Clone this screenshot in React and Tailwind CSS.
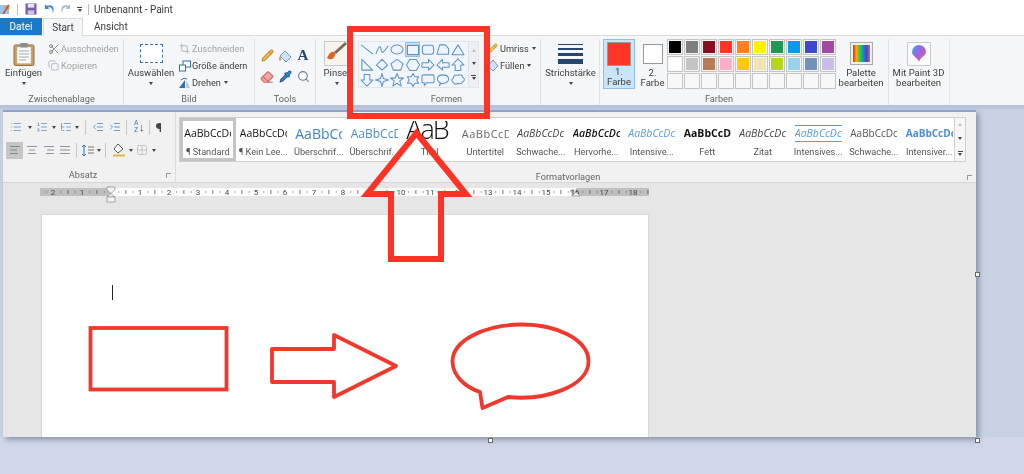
import React from "react";
import { Scissors, Copy, Crop, Pencil, Search, Pipette, Eraser, List, ListOrdered, ListTree, IndentDecrease, IndentIncrease, AlignLeft, AlignCenter, AlignRight, AlignJustify, Grid2x2 } from "lucide-react";

const Caret = ({ className = "" }) => <span className={`inline-block w-0 h-0 border-l-[2.5px] border-r-[2.5px] border-t-[3px] border-l-transparent border-r-transparent border-t-[#444] ${className}`} />;

const S = { fill: "#eef4fb", stroke: "#5c93c4", strokeWidth: 1.1, strokeLinejoin: "round" };
const shapes = [
  <path d="M1 2L14 12" {...S} fill="none" />,
  <path d="M1 12C4 3 6 2 6.5 7S9 11 14 3" {...S} fill="none" />,
  <ellipse cx="7.5" cy="7" rx="6.5" ry="4.8" {...S} />,
  <rect x="1.5" y="2.5" width="12" height="10" {...S} strokeWidth="1.3" />,
  <rect x="1.5" y="2.5" width="12" height="9.5" rx="2.5" {...S} />,
  <path d="M1 12L4 2H10L13.5 6V12Z" {...S} />,
  <path d="M7.5 2L14 12.5H1Z" {...S} />,
  <path d="M2 1.5V13H13.5Z" {...S} />,
  <path d="M7.5 1.5L13.5 7.5L7.5 13L1.5 7.5Z" {...S} />,
  <path d="M7.5 1.5L14 6L11.5 13H3.5L1 6Z" {...S} />,
  <path d="M4 1.5H11L14.5 7.5L11 13.5H4L.5 7.5Z" {...S} />,
  <path d="M1 5H8V1.5L14 7.5L8 13V10H1Z" {...S} />,
  <path d="M14 5H7V1.5L1 7.5L7 13V10H14Z" {...S} />,
  <path d="M7.5 1L14 7.5H10.5V13.5H4.5V7.5H1Z" {...S} />,
  <path d="M7.5 14L14 7.5H10.5V1.5H4.5V7.5H1Z" {...S} />,
  <path d="M7.5 .5L9 6L14.5 7.5L9 9L7.5 14.5L6 9L.5 7.5L6 6Z" {...S} />,
  <path d="M7.5 .5L9.5 5.5H14.5L10.5 8.5L12 14L7.5 11L3 14L4.5 8.5L.5 5.5H5.5Z" {...S} />,
  <path d="M7.5 .5L9.5 4H13.5L11.5 7.5L13.5 11H9.5L7.5 14.5L5.5 11H1.5L3.5 7.5L1.5 4H5.5Z" {...S} />,
  <path d="M2.5 2H12.5Q14 2 14 3.5V9Q14 10.5 12.5 10.5H6L3.5 13.5V10.5H2.5Q1 10.5 1 9V3.5Q1 2 2.5 2Z" {...S} />,
  <path d="M3.5 13.5L4.5 10.5C-.5 8 1 2 7.5 2S15.5 8 10.5 10.5C8.5 11.3 6.5 11.3 5.5 11Z" {...S} />,
  <path d="M3 10.5C0 9.5 .5 6 2.5 5.5C2.5 2.5 6 1.5 7.5 2.5C10 1 12.5 2.5 12.5 4.5C15 5.5 15 9 12 10C10.5 12 8 11.5 7 11C5.5 12.5 3 12 3 10.5Z" {...S} />,
];

const row1 = ["#000000", "#7f7f7f", "#880f1f", "#ff3526", "#ff7f27", "#fff200", "#1d9a50", "#0f96ee", "#3f48cc", "#a349a4"];
const row2 = ["#ffffff", "#c3c3c3", "#b97a57", "#ffaec9", "#ffc90e", "#efe4b0", "#b5d61d", "#99d2ea", "#7092be", "#c8bfe7"];

function Group({ width, label, children, labelClass = "" }) {
  return (
    <div className="flex flex-col shrink-0 h-[66px] border-r border-[#e2e3e6]" style={{ width }}>
      <div className="flex-1 flex min-h-0">{children}</div>
      <div className={`h-[14px] leading-[16px] text-center text-[#666] text-[9.2px] ${labelClass}`}>{label}</div>
    </div>
  );
}

function BigButton({ width, icon, lines, caret = true, iconH = 29, className = "" }) {
  return (
    <div className={`flex flex-col items-center shrink-0 ${className}`} style={{ width }}>
      <div className="flex items-center justify-center" style={{ height: iconH }}>{icon}</div>
      {lines.map((l) => <div key={l} className="text-[9.5px] leading-[10px] text-[#3d3d3d] whitespace-nowrap">{l}</div>)}
      {caret && <Caret className="mt-[4px]" />}
    </div>
  );
}

function SmallRow({ icon, text, disabled, caret }) {
  return (
    <div className={`flex items-center h-[17px] text-[9.2px] whitespace-nowrap ${disabled ? "text-[#a3a3a3]" : "text-[#3d3d3d]"}`}>
      <span className="w-[13px] flex justify-center mr-[1px]">{icon}</span>
      <span>{text}</span>
      {caret && <Caret className="ml-[3px]" />}
    </div>
  );
}

function TitleBar() {
  return (
    <div className="h-[18px] flex items-center bg-white text-[10px] text-[#3a3a3a]">
      <svg width="11" height="13" viewBox="0 0 11 13"><rect x="0" y="2" width="9" height="9" fill="#9dc3e6" /><circle cx="7" cy="5" r="2.5" fill="#e8a33d" /><path d="M3 11L9 2" stroke="#c0504d" strokeWidth="1.5" /></svg>
      <span className="ml-[6px] w-px h-[11px] bg-[#bbb]" />
      <svg width="12" height="12" viewBox="0 0 13 13" className="ml-[7px]"><rect x=".5" y=".5" width="12" height="12" fill="#7a5ea8" /><rect x="3" y="1" width="7" height="4" fill="#e6e6f2" /><rect x="3" y="8" width="7" height="4.500" fill="#d0c4e2" /></svg>
      <svg width="11" height="12" viewBox="0 0 12 12" className="ml-[7px]"><path d="M1 1V6H6L4 4.5C7 3 10 5 9.5 11C12 6 10 0 3.5 2.5Z" fill="#2f8fd6" /></svg>
      <svg width="11" height="12" viewBox="0 0 12 12" className="ml-[5px]"><path d="M11 1V6H6L8 4.5C5 3 2 5 2.500 11C0 6 2 0 8.5 2.5Z" fill="#aabcca" /></svg>
      <span className="ml-[6px] flex flex-col items-center gap-[1px]"><span className="w-[5px] h-px bg-[#444]" /><Caret /></span>
      <span className="ml-[6px] w-px h-[11px] bg-[#bbb]" />
      <span className="ml-[5px]">Unbenannt - Paint</span>
    </div>
  );
}

function Tabs() {
  return (
    <div className="h-[17px] flex items-stretch bg-white text-[10px]">
      <div className="w-[42px] bg-[#1979ca] text-white flex items-center justify-center">Datei</div>
      <div className="w-[40px] ml-px bg-[#f5f6f7] border-x border-t border-[#dadbdc] text-[#3a3a3a] flex items-center justify-center relative z-10 -mb-px">Start</div>
      <div className="ml-[11px] text-[#3a3a3a] flex items-center">Ansicht</div>
    </div>
  );
}

function Ribbon() {
  const clip = (
    <svg width="22" height="24" viewBox="0 0 22 24"><rect x="1" y="3" width="20" height="20.5" rx="1.5" fill="#c99f6b" stroke="#94703f" /><rect x="4" y="5" width="14" height="16.5" fill="#fdfdf7" stroke="#b7b7b0" strokeWidth=".5" /><path d="M6 9H16M6 12H16M6 15H16M6 18H13" stroke="#9ab" strokeWidth="1" /><rect x="7" y="1" width="8" height="4.5" fill="#8f8f8f" rx="1" /></svg>
  );
  return (
    <div className="h-[70px] bg-[#f5f6f7] border-t border-[#dadbdc] flex pt-[3px]">
      <Group width={124} label="Zwischenablage">
        <BigButton width={47} icon={clip} lines={["Einfügen"]} />
        <div className="pt-[1px]">
          <SmallRow disabled icon={<Scissors size={12} color="#8a8a8a" />} text="Ausschneiden" />
          <SmallRow disabled icon={<Copy size={11} color="#a9b5c7" />} text="Kopieren" />
        </div>
      </Group>
      <Group width={131} label="Bild">
        <BigButton width={54} icon={<span className="block w-[23px] h-[19px] border border-dashed border-[#3c6eae] bg-white" />} lines={["Auswählen"]} />
        <div className="pt-[1px]">
          <SmallRow disabled icon={<Crop size={11} color="#a7afbd" />} text="Zuschneiden" />
          <SmallRow icon={<svg width="12" height="12" viewBox="0 0 12 12"><rect x="4" y="1" width="7.5" height="6" fill="#fff" stroke="#2f6fb5" /><rect x=".5" y="5" width="6" height="6" fill="#fff" stroke="#2f6fb5" /></svg>} text="Größe ändern" />
          <SmallRow caret icon={<svg width="13" height="12" viewBox="0 0 13 12"><path d="M1 11L7 3V11Z" fill="#2f6fb5" /><path d="M8 3L12 11H8Z" fill="#b7c9dd" /><path d="M3 3Q6 0 9 2" stroke="#2f6fb5" fill="none" /></svg>} text="Drehen" />
        </div>
      </Group>
      <Group width={61} label="Tools">
        <div className="grid grid-cols-[18px_18px_18px] grid-rows-[21px_21px] place-items-center ml-[3px] mt-[6px]">
          <Pencil size={13} color="#c08a2c" fill="#f0c05a" />
          <svg width="14" height="14" viewBox="0 0 14 14"><path d="M7 2L13 8L8 13L2 7Z" fill="#cfe2f5" stroke="#6d9cc9" /><path d="M2 7Q0 11 2 12Q4 11 2 7" fill="#e47f5a" /></svg>
          <span className="font-['Liberation_Serif',serif] font-bold text-[15px] leading-none text-[#24456e]">A</span>
          <Eraser size={14} color="#c96f6a" fill="#f2a6a2" />
          <Pipette size={13} color="#1f5d99" fill="#3f8bd0" />
          <Search size={13} color="#6f7f90" />
        </div>
      </Group>
      <Group width={37} label="">
        <BigButton width={37} className="pl-[4px]" lines={["Pinsel"]} icon={
          <svg width="25" height="25" viewBox="0 0 25 25"><rect x=".5" y=".5" width="24" height="24" fill="#f7f3ee" stroke="#c9c9c9" /><path d="M3 17C8 21 12 15 11 12C9 9 5 12 3 17Z" fill="#d9661f" /><path d="M11 12L22 2" stroke="#7a6a58" strokeWidth="3" /></svg>} />
      </Group>
      <Group width={188} label="Formen">
        <div className="pl-[5px] pt-[2px] flex items-start">
          <div className="flex bg-[#f1f6fc] border border-[#e3e5e9] h-[47px]">
            <div className="grid grid-cols-[repeat(7,15.3px)] grid-rows-[repeat(3,15.3px)] w-[108px]">
              {shapes.map((s, i) => (
                <div key={i} className={`flex items-center justify-center ${i === 3 ? "bg-[#cde4f7] border border-[#8dbfe8]" : ""}`}>
                  <svg width="14" height="14" viewBox="0 0 15 15" className="overflow-visible">{s}</svg>
                </div>
              ))}
            </div>
            <div className="w-[10px] ml-px bg-[#eeeff2] border-l border-[#e0e1e5] flex flex-col items-center justify-around py-[2px]">
              <Caret className="rotate-180 opacity-30" />
              <Caret />
              <span className="flex flex-col items-center gap-[1px]"><span className="w-[5px] h-px bg-[#444]" /><Caret /></span>
            </div>
          </div>
          <div className="ml-[7px] -mt-[1px]">
            <SmallRow caret icon={<Pencil size={11} color="#c8902f" fill="#f0c05a" />} text="Umriss" />
            <SmallRow caret icon={<svg width="12" height="13" viewBox="0 0 12 13"><path d="M6 1L11 7L6 12L1 7Z" fill="#cfe2f5" stroke="#6d9cc9" /></svg>} text="Füllen" />
          </div>
        </div>
      </Group>
      <Group width={59} label="">
        <BigButton width={59} lines={["Strichstärke"]} icon={
          <span className="flex flex-col w-[25px] gap-[3px]">
            <span className="h-px bg-[#26456f]" /><span className="h-[2px] bg-[#26456f]" /><span className="h-[3px] bg-[#26456f]" /><span className="h-[5px] bg-[#26456f]" />
          </span>} />
      </Group>
      <Group width={289} label={<span className="pr-[50px]">Farben</span>}>
        <div className="flex items-start pl-[3px]">
          <div className="w-[32px] h-[50px] bg-[#cce4f7] border border-[#8fc0ea] flex flex-col items-center pt-[2px]">
            <span className="block w-[24px] h-[24px] bg-[#ff3526] border-[1px] border-[#999]" />
            <span className="text-[9.5px] leading-[10px] text-[#3d3d3d] mt-[1px]">1.</span>
            <span className="text-[9.5px] leading-[10px] text-[#3d3d3d]">Farbe</span>
          </div>
          <div className="w-[35px] flex flex-col items-center pt-[5px]">
            <span className="block w-[20px] h-[20px] bg-white border border-[#999]" />
            <span className="text-[9.5px] leading-[10px] text-[#3d3d3d] mt-[4px]">2.</span>
            <span className="text-[9.5px] leading-[10px] text-[#3d3d3d]">Farbe</span>
          </div>
          <div className="grid grid-cols-[repeat(10,17px)] auto-rows-[17px] ml-[-3px]">
            {[...row1, ...row2].map((c, i) => (
              <div key={i} className="w-[16px] h-[16px] border border-[#c4c4c4] p-px"><div className="w-full h-full" style={{ background: c }} /></div>
            ))}
            {Array.from({ length: 10 }).map((_, i) => <div key={i} className="w-[16px] h-[16px] border border-[#c4c4c4] bg-[#f8f8f9]" />)}
          </div>
          <BigButton width={50} caret={false} className="ml-[-1px]" lines={["Palette", "bearbeiten"]} icon={
            <span className="block w-[23px] h-[23px] border border-[#aaa] p-[2px] bg-[#eee]"><span className="block w-full h-full bg-[linear-gradient(to_right,#e23,#fa0,#3c3,#09c,#63c,#888)]" /></span>} />
        </div>
      </Group>
      <Group width={61} label="">
        <BigButton width={59} caret={false} lines={["Mit Paint 3D", "bearbeiten"]} icon={
          <span className="flex items-center justify-center w-[24px] h-[24px] border border-[#ccc] bg-[#fafafa]">
            <svg width="14" height="18" viewBox="0 0 14 18"><defs><linearGradient id="p3" x1="0" y1="0" x2="1" y2="1"><stop offset="0" stopColor="#33a6f0" /><stop offset=".5" stopColor="#a65fe0" /><stop offset="1" stopColor="#f0703c" /></linearGradient></defs><path d="M7 17C6 13 0 11 0 7A7 7 0 0 1 14 7C14 11 8 12 7 17Z" fill="url(#p3)" /></svg>
          </span>} />
      </Group>
    </div>
  );
}

const styles = [
  ["AaBbCcDc", "¶ Standard", "text-[#111] text-[10.5px]"],
  ["AaBbCcDc", "¶ Kein Lee...", "text-[#111] text-[10.5px]"],
  ["AaBbCc", "Überschrif...", "text-[#3f83c4] text-[14px]"],
  ["AaBbCcD", "Überschrif...", "text-[#4a8dcc] text-[12px]"],
  ["AaB", "Titel", "text-[#111] text-[27px] font-light tracking-[-2px] -mt-[9px]"],
  ["AaBbCcD", "Untertitel", "text-[#666] text-[11px] tracking-[0.5px]"],
  ["AaBbCcDc", "Schwache...", "text-[#444] text-[10.5px] italic"],
  ["AaBbCcDc", "Hervorhe...", "text-[#111] text-[10.5px] italic font-semibold"],
  ["AaBbCcDc", "Intensive...", "text-[#5b9bd5] text-[10.5px] italic"],
  ["AaBbCcDc", "Fett", "text-[#111] text-[10.5px] font-bold"],
  ["AaBbCcDc", "Zitat", "text-[#444] text-[10.5px] italic"],
  ["AaBbCcDc", "Intensives...", "text-[#5b9bd5] text-[10.5px] italic border-y border-[#5b9bd5]"],
  ["AaBbCcDc", "Schwache...", "text-[#555] text-[10px]"],
  ["AaBbCcDc", "Intensiver...", "text-[#4a8dd6] text-[10px] font-bold"],
];

const I = { size: 12, strokeWidth: 1.4, color: "#5f6b78" };
const Sep = ({ className = "mx-[4px]" }) => <span className={`w-px h-[15px] bg-[#c6c6c6] ${className}`} />;

function WordRibbon() {
  return (
    <div className="h-[71px] bg-[#f1f1f2] border-b border-[#d4d4d4] flex">
      <div className="w-[173px] shrink-0 flex flex-col border-r border-[#dcdcdc]">
        <div className="h-[26px] flex items-center pl-[7px] pt-[6px]">
          <List {...I} color="#4d84bd" /><Caret className="ml-[6px]" />
          <ListOrdered {...I} color="#4d84bd" className="ml-[4px]" /><Caret className="ml-[4px]" />
          <ListTree {...I} color="#4d84bd" className="ml-[4px]" /><Caret className="ml-[3px]" />
          <Sep className="ml-[6px]" />
          <IndentDecrease {...I} color="#2f74bd" className="ml-[6px]" /><IndentIncrease {...I} color="#2f74bd" className="ml-[5px]" />
          <Sep className="ml-[5px]" />
          <span className="text-[7px] leading-[7px] text-[#2f74bd] w-[5px] ml-[7px]">A<br />Z</span><span className="text-[11px] leading-none text-[#444]">↓</span>
          <Sep className="ml-[4px]" />
          <span className="text-[13px] leading-none text-[#444] font-bold ml-[6px]">¶</span>
        </div>
        <div className="h-[26px] flex items-center pl-[3px] pt-[3px]">
          <span className="w-[17px] h-[17px] bg-[#c6c6c6] flex items-center justify-center"><AlignLeft {...I} /></span>
          <span className="w-[17px] flex justify-center"><AlignCenter {...I} /></span>
          <span className="w-[17px] flex justify-center"><AlignRight {...I} /></span>
          <span className="w-[15px] flex justify-center"><AlignJustify {...I} /></span>
          <Sep />
          <svg width="13" height="13" viewBox="0 0 13 13"><path d="M3 1V12M1 3L3 1L5 3M1 10L3 12L5 10" stroke="#2f74bd" fill="none" /><path d="M7 3H13M7 6H13M7 9H13" stroke="#777" /></svg>
          <Caret className="ml-[3px]" />
          <Sep className="ml-[4px] mr-[6px]" />
          <svg width="14" height="14" viewBox="0 0 14 14"><path d="M6 1L11 6L6 10L2 6Z" fill="#fff" stroke="#555" /><rect x="1" y="11.5" width="12" height="2" fill="#e8b53d" /></svg>
          <Caret className="ml-[3px]" />
          <span className="ml-[3px]"><Grid2x2 size={12} strokeWidth={1} color="#9aa3ad" /></span>
          <Caret className="ml-[4px]" />
        </div>
        <div className="flex-1 flex items-center justify-center relative text-[9.2px] text-[#666] pr-[12px] pt-[7px]">
          Absatz
          <span className="absolute right-[4px] bottom-[4px] w-[5px] h-[5px] border-l border-t border-[#999]" />
        </div>
      </div>
      <div className="flex-1 flex flex-col min-w-0">
        <div className="pl-[3px] pt-[5px] flex">
          <div className="flex bg-white border border-[#cfcfcf] h-[45px] w-[776px] overflow-hidden">
            {styles.map(([s, l, c], i) => (
              <div key={i} className={`shrink-0 w-[55.5px] h-full flex flex-col items-center overflow-hidden ${i === 0 ? "border-[3px] border-[#c4c4c4]" : "pt-[3px]"}`}>
                <div className="h-[24px] w-[47px] flex items-center justify-start overflow-hidden whitespace-nowrap font-['Open_Sans',sans-serif]">
                  <span className={`leading-[15px] ${c}`}>{s}</span>
                </div>
                <div className="text-[9.2px] leading-[12px] text-[#555] whitespace-nowrap mt-[1px]">{l}</div>
              </div>
            ))}
          </div>
          <div className="w-[11px] h-[45px] bg-[#f7f7f7] border border-l-0 border-[#cfcfcf] flex flex-col items-center justify-around">
            <Caret className="rotate-180 opacity-30" /><Caret />
            <span className="flex flex-col items-center gap-[1px]"><span className="w-[5px] h-px bg-[#444]" /><Caret /></span>
          </div>
        </div>
        <div className="flex-1 flex items-center justify-center relative text-[9.2px] text-[#666] pr-[16px] pt-[8px]">
          Formatvorlagen
          <span className="absolute right-[4px] bottom-[4px] w-[5px] h-[5px] border-l border-t border-[#999]" />
        </div>
      </div>
    </div>
  );
}

function Ruler() {
  const nums = [];
  for (let n = -2; n <= 18; n++) if (n !== 0) nums.push(n);
  const ticks = [];
  for (let n = -2.75; n <= 18.5; n += 0.25) {
    if (Number.isInteger(n)) continue;
    ticks.push(n);
  }
  return (
    <svg width="612" height="20" viewBox="0 0 612 20" className="block">
      <rect x="0" y="3" width="71" height="8" fill="#bfbfbf" />
      <rect x="71" y="3" width="465" height="8" fill="#ffffff" />
      <rect x="536" y="3" width="73" height="8" fill="#bfbfbf" />
      {ticks.map((n, i) => {
        const x = 71 + n * 29;
        if (x < 1 || x > 608) return null;
        const half = Math.abs(n * 2) % 2 === 1;
        return half ? <rect key={i} x={x} y="5" width=".8" height="4" fill="#555" /> : <rect key={i} x={x} y="6.5" width="1" height="1" fill="#555" />;
      })}
      {nums.map((n) => <text key={n} x={71 + n * 29} y="10" fontSize="8" textAnchor="middle" fill="#444" fontFamily="Roboto, sans-serif" stroke={n > 0 && n < 16 ? "#fff" : "#bfbfbf"} strokeWidth="2" paintOrder="stroke">{Math.abs(n)}</text>)}
      <path d="M67 2H75V5L71 8.5L67 5Z M71 8.5L75 12H67Z" fill="#f4f4f4" stroke="#888" strokeWidth=".7" />
      <rect x="67" y="12" width="8" height="5" fill="#f4f4f4" stroke="#888" strokeWidth=".7" />
      <path d="M536 7L540 11H532Z" fill="#f4f4f4" stroke="#888" strokeWidth=".7" />
    </svg>
  );
}

function WordWindow() {
  return (
    <div className="relative w-[973px] h-[327px] bg-[#e6e6e6] border-t-2 border-[#8ea2d2] shadow-[3px_3px_5px_rgba(90,100,130,0.55)]">
      <WordRibbon />
      <div className="pl-[37px] pt-[2px] h-[31px]"><Ruler /></div>
      <div className="relative ml-[38px] w-[608px] h-[223px] bg-white border-l border-t border-r border-[#d8d8d8]">
        <div className="absolute left-[70px] top-[70px] w-px h-[15px] bg-[#222]" />
        <svg width="607" height="223" viewBox="0 0 607 223" className="absolute -left-[1px] top-0 overflow-visible">
          <g fill="none" stroke="#f0392c" strokeWidth="3.8" strokeLinejoin="miter">
            <rect x="49.5" y="113" width="136" height="61.5" />
            <path d="M231 134H293V120L355 151L293 182V167H231Z" strokeLinejoin="round" />
            <path d="M439 177L441.500 193L467 182C505 186 548 171 547.500 146C547 124 514 109 480 109.500C444 110 411 125 411.500 147C412 161 424 172 439 177Z" strokeLinejoin="round" />
          </g>
        </svg>
      </div>
    </div>
  );
}

const Handle = ({ className }) => <span className={`absolute w-[5px] h-[5px] bg-white border border-[#666] ${className}`} />;

export default function App() {
  return (
    <div className="relative w-[1024px] h-[474px] overflow-hidden bg-[#cfd7e8] font-['Roboto',sans-serif] blur-[0.35px]">
      <TitleBar />
      <Tabs />
      <Ribbon />
      <div className="h-[5px] bg-[linear-gradient(#b3bfd6,#c4cee1)]" />
      <div className="pl-[3px] bg-[#c8d2e4] h-[327px]"><WordWindow /></div>
      <Handle className="left-[975px] top-[272px]" />
      <Handle className="left-[488px] top-[438px]" />
      <Handle className="left-[975px] top-[438px]" />
      <div className="absolute left-[347px] top-[26px] w-[143px] h-[93px] border-[6px] border-[#ff3226]" />
      <svg width="1024" height="474" viewBox="0 0 1024 474" className="absolute left-0 top-0 pointer-events-none">
        <path d="M416.500 133L466 194H441V259H391V194H367Z" fill="none" stroke="#ff3226" strokeWidth="6" strokeLinejoin="miter" />
      </svg>
    </div>
  );
}
